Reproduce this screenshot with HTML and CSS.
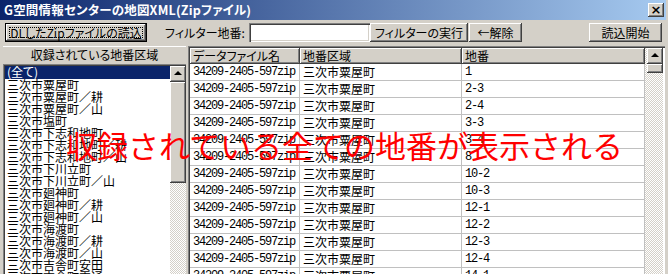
FILE: index.html
```html
<!DOCTYPE html>
<html lang="ja">
<head>
  <meta charset="UTF-8" />
  <title>G空間情報センターの地図XML(Zipファイル)</title>
  <link rel="stylesheet" href="styles.css">
</head>
<body>
  <div class="window">
    <div class="titlebar">
      <span class="title">G空間情報センターの地図XML(Zipファイル)</span>
      <span class="close">×</span>
    </div>

    <div class="toolbar">
      <button class="btn btn-default btn-load">DLしたZipファイルの読込</button>
      <label class="filter-label">フィルター地番:</label>
      <input type="text" class="filter-input" />
      <button class="btn btn-exec">フィルターの実行</button>
      <button class="btn btn-clear">←解除</button>
      <button class="btn btn-start">読込開始</button>
    </div>

    <div class="main">
      <div class="areas">
        <div class="areas-head">収録されている地番区域</div>
        <div class="listbox">
          <ul class="list">
            <li class="selected">(全て)</li>
            <li>三次市粟屋町</li>
            <li>三次市粟屋町／耕</li>
            <li>三次市粟屋町／山</li>
            <li>三次市塩町</li>
            <li>三次市下志和地町</li>
            <li>三次市下志和地町／耕</li>
            <li>三次市下志和地町／山</li>
            <li>三次市下川立町</li>
            <li>三次市下川立町／山</li>
            <li>三次市廻神町</li>
            <li>三次市廻神町／耕</li>
            <li>三次市廻神町／山</li>
            <li>三次市海渡町</li>
            <li>三次市海渡町／耕</li>
            <li>三次市海渡町／山</li>
            <li>三次市吉舎町安田</li>
            <li>三次市吉舎町雲通</li>
          </ul>
          <div class="vscroll">
            <div class="arrow-btn"><span class="tri"></span></div>
            <div class="thumb thumb-long"></div>
          </div>
        </div>
      </div>

      <div class="grid">
        <div class="rows">
          <div class="row head">
            <div>データファイル名</div>
            <div>地番区域</div>
            <div>地番</div>
          </div>
          <div class="row"><div class="mono">34209-2405-597zip</div><div>三次市粟屋町</div><div class="mono">1</div></div>
          <div class="row"><div class="mono">34209-2405-597zip</div><div>三次市粟屋町</div><div class="mono">2-3</div></div>
          <div class="row"><div class="mono">34209-2405-597zip</div><div>三次市粟屋町</div><div class="mono">2-4</div></div>
          <div class="row"><div class="mono">34209-2405-597zip</div><div>三次市粟屋町</div><div class="mono">3-3</div></div>
          <div class="row"><div class="mono">34209-2405-597zip</div><div>三次市粟屋町</div><div class="mono">3-4</div></div>
          <div class="row"><div class="mono">34209-2405-597zip</div><div>三次市粟屋町</div><div class="mono">8</div></div>
          <div class="row"><div class="mono">34209-2405-597zip</div><div>三次市粟屋町</div><div class="mono">10-2</div></div>
          <div class="row"><div class="mono">34209-2405-597zip</div><div>三次市粟屋町</div><div class="mono">10-3</div></div>
          <div class="row"><div class="mono">34209-2405-597zip</div><div>三次市粟屋町</div><div class="mono">12-1</div></div>
          <div class="row"><div class="mono">34209-2405-597zip</div><div>三次市粟屋町</div><div class="mono">12-2</div></div>
          <div class="row"><div class="mono">34209-2405-597zip</div><div>三次市粟屋町</div><div class="mono">12-3</div></div>
          <div class="row"><div class="mono">34209-2405-597zip</div><div>三次市粟屋町</div><div class="mono">12-4</div></div>
          <div class="row"><div class="mono">34209-2405-597zip</div><div>三次市粟屋町</div><div class="mono">14-1</div></div>
        </div>
        <div class="vscroll">
          <div class="arrow-btn"><span class="tri"></span></div>
          <div class="thumb thumb-short"></div>
        </div>
      </div>
    </div>

    <div class="note">収録されている全ての地番が表示される</div>
  </div>
</body>
</html>
```

FILE: styles.css
```css
body { margin: 0; background: #d4d0c8; font-family: "Noto Sans CJK JP", sans-serif; }

.window {
  position: relative;
  width: 668px;
  height: 274px;
  overflow: hidden;
  background: #d4d0c8;
  font-size: 12px;
  font-feature-settings: "palt";
  color: #000;
}

/* title bar */
.titlebar {
  height: 20px;
  margin-right: 2px;
  padding: 0 2px 0 4px;
  display: flex;
  align-items: center;
  justify-content: space-between;
  background: linear-gradient(90deg, #0a246a, #a6caf0);
}
.title { color: #fff; font-weight: bold; font-size: 12.5px; letter-spacing: 0.2px; line-height: 20px; }
.close {
  width: 16px;
  height: 14px;
  background: #d4d0c8;
  box-shadow: inset -1px -1px #404040, inset 1px 1px #fff, inset -2px -2px #808080;
  font-weight: bold;
  font-size: 13px;
  line-height: 14px;
  text-align: center;
  font-family: "DejaVu Sans", sans-serif;
}

/* toolbar */
.toolbar {
  height: 25px;
  padding: 0 6px 0 5px;
  display: flex;
  align-items: center;
}
.btn {
  height: 19px;
  padding: 0;
  border: none;
  background: #d4d0c8;
  box-shadow: inset -1px -1px #404040, inset 1px 1px #fff, inset -2px -2px #808080;
  font-family: inherit;
  font-size: 12px;
  font-feature-settings: "palt";
  line-height: 17px;
  color: #000;
}
.btn-default {
  border: 1px solid #000;
  outline: 1px dotted #000;
  outline-offset: -5px;
}
.btn-load { width: 142px; }
.filter-label { margin-left: 18px; width: 84px; }
.filter-input {
  width: 121px;
  height: 19px;
  box-sizing: border-box;
  border: none;
  background: #fff;
  box-shadow: inset 1px 1px #808080, inset 2px 2px #404040, inset -1px -1px #fff, inset -2px -2px #d4d0c8;
}
.btn-exec { width: 98px; }
.btn-clear { width: 53px; margin-left: 1px; }
.btn-start { width: 73px; margin-left: auto; }

/* main area */
.main {
  height: 229px;
  padding: 1px 3px 0 3px;
  display: flex;
  gap: 2px;
}

.areas { width: 183px; display: flex; flex-direction: column; }
.areas-head {
  height: 17px;
  line-height: 16px;
  text-align: center;
  border-top: 1px solid #fff;
}
.listbox {
  flex: 1;
  display: flex;
  background: #fff;
  box-shadow: inset 1px 1px #808080, inset 2px 2px #404040;
  padding: 2px 0 0 2px;
  overflow: hidden;
}
.list {
  flex: 1;
  margin: 0;
  padding: 0;
  list-style: none;
  line-height: 12px;
}
.list li { height: 12px; padding-left: 2px; white-space: nowrap; }
.list li.selected { background: #0a246a; color: #fff; height: 13px; }

/* scrollbars */
.vscroll {
  width: 16px;
  background-image: conic-gradient(#fff 25%, #d4d0c8 0 50%, #fff 0 75%, #d4d0c8 0);
  background-size: 2px 2px;
}
.arrow-btn, .thumb {
  background: #d4d0c8;
  box-shadow: inset -1px -1px #404040, inset 1px 1px #fff, inset -2px -2px #808080;
}
.arrow-btn {
  height: 16px;
  display: flex;
  align-items: center;
  justify-content: center;
}
.tri {
  width: 0;
  height: 0;
  border-left: 4px solid transparent;
  border-right: 4px solid transparent;
  border-bottom: 4px solid #000;
  margin-bottom: 2px;
}
.thumb-long { height: 101px; }
.thumb-short { height: 9px; }

/* data grid */
.grid {
  width: 477px;
  display: flex;
  padding: 2px 2px 0 2px;
  box-sizing: border-box;
  background: #fff;
  box-shadow: inset 1px 1px #808080, inset 2px 2px #404040;
  margin-right: -3px;
}
.grid .vscroll { width: 18px; padding-left: 2px; box-sizing: border-box; }
.rows { width: 455px; }
.row {
  display: grid;
  grid-template-columns: 110px 162px 183px;
  height: 17px;
  box-sizing: border-box;
  border-bottom: 1px solid #c0c0c0;
}
.row div {
  padding-left: 3px;
  border-right: 1px solid #c0c0c0;
  line-height: 16px;
  white-space: nowrap;
  overflow: hidden;
}
.row.head { height: 16px; border-bottom: none; }
.row.head div {
  background: #d4d0c8;
  border-right: none;
  box-shadow: inset -1px -1px #404040, inset 1px 1px #fff, inset -2px -2px #808080;
  line-height: 15px;
}
.mono {
  font-family: "Liberation Mono", monospace;
  letter-spacing: -1.2px;
}

/* red annotation over the window */
.note {
  position: absolute;
  left: 66px;
  top: 129px;
  font-size: 31px;
  line-height: 1;
  font-weight: 400;
  font-feature-settings: normal;
  color: #ff0000;
  white-space: nowrap;
}
```
